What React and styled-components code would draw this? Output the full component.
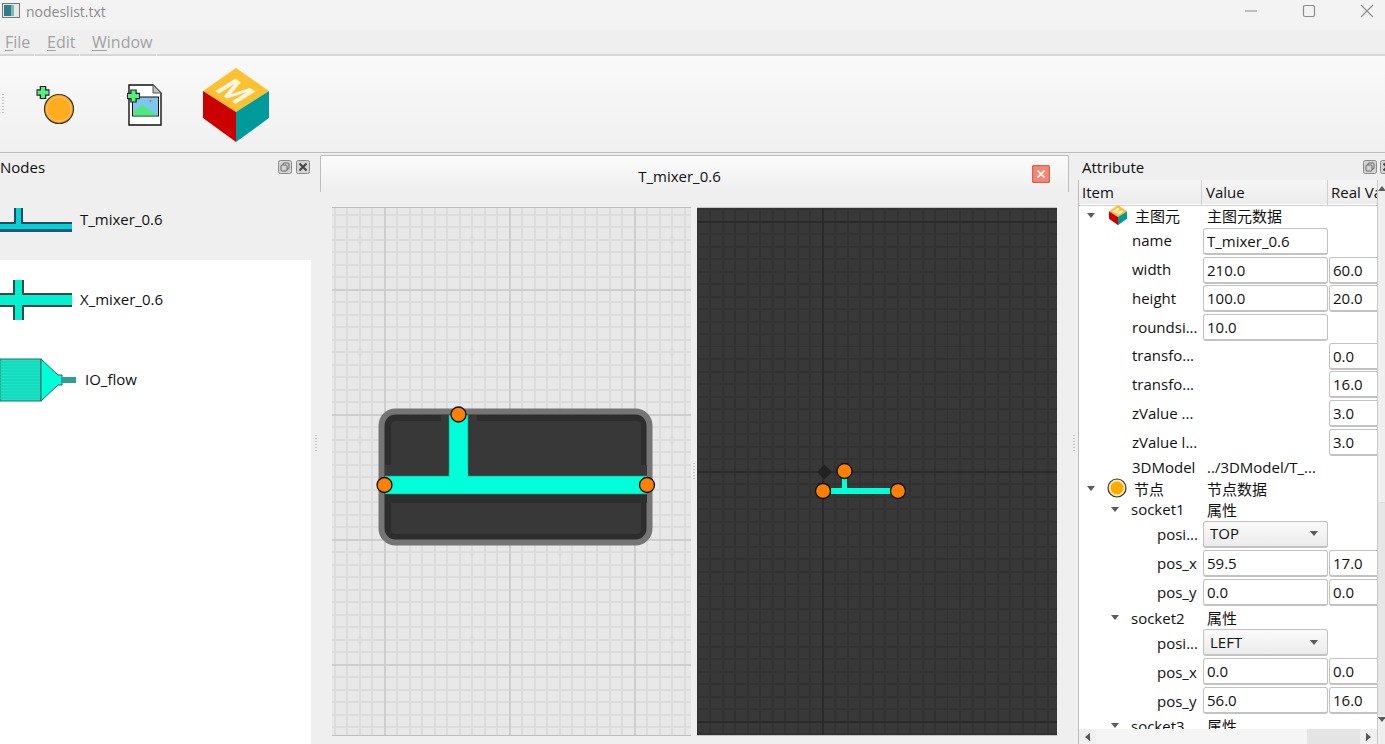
import styled, { createGlobalStyle } from "styled-components";

const GlobalStyle = createGlobalStyle`
  html, body {
    margin: 0;
    padding: 0;
    height: 100%;
    overflow: hidden;
    background: #efefef;
  }
  body {
    font-family: "Open Sans", "Noto Sans CJK SC", sans-serif;
    font-size: 15px;
    color: #111;
  }
`;

const Page = styled.div`
  width: 1385px;
  height: 744px;
  display: flex;
  flex-direction: column;
  overflow: hidden;
`;

const TitleBar = styled.div`
  height: 30px;
  flex: none;
  box-sizing: border-box;
  padding-bottom: 8px;
  margin-right: -11px;
  background: #f3f3f3;
  display: flex;
  align-items: center;
  color: #8c8c8c;
`;

const AppIcon = styled.svg`
  width: 20px;
  height: 18px;
  margin: 0 5px 0 1px;
`;

const TitleText = styled.span`
  flex: 1;
  font-size: 14px;
`;

const WinButton = styled.svg`
  width: 58px;
  height: 24px;
  flex: none;
`;

const MenuBar = styled.div`
  height: 26px;
  flex: none;
  background: #efefef;
  display: flex;
  gap: 1px;
`;

const MenuItem = styled.div`
  width: ${(p) => p.$w}px;
  flex: ${(p) => (p.$fill ? 1 : "none")};
  box-sizing: border-box;
  padding: 1px 0 0 ${(p) => p.$pad || 0}px;
  font-size: 16px;
  color: #a2a2a2;
  border-bottom: 2px solid #d6d6d6;
  u {
    text-underline-offset: 2px;
  }
`;

const ToolBar = styled.div`
  height: 96px;
  flex: none;
  box-sizing: content-box;
  padding-left: 2px;
  background: linear-gradient(#f9f9f9, #f0f0f0);
  border-bottom: 1px solid #bdbdbd;
  display: flex;
  align-items: center;
`;

const Grip = styled.div`
  width: 2px;
  height: ${(p) => p.$h}px;
  flex: none;
  background: repeating-linear-gradient(#c4c4c4 0 1px, transparent 1px 3px);
`;

const ToolButton = styled.div`
  width: ${(p) => p.$w}px;
  flex: none;
  display: flex;
  justify-content: center;
  padding-top: ${(p) => p.$down || 0}px;
`;

const Main = styled.div`
  flex: 1;
  min-height: 0;
  display: flex;
  background: #efefef;
`;

const NodesDock = styled.div`
  width: 311px;
  flex: none;
  display: flex;
  flex-direction: column;
`;

const DockHeader = styled.div`
  height: 27px;
  flex: none;
  display: flex;
  align-items: center;
  margin-right: ${(p) => p.$right}px;
  padding-left: ${(p) => p.$left}px;
  box-sizing: border-box;
  gap: ${(p) => p.$gap}px;
`;

const DockTitle = styled.span`
  flex: 1;
`;

const DockIcon = styled.svg`
  width: 14px;
  height: 14px;
  flex: none;
  margin-top: 1px;
`;

const NodeList = styled.div`
  flex: 1;
  background: #fff;
  overflow: hidden;
`;

const NodeRow = styled.div`
  height: 80px;
  display: flex;
  align-items: center;
  background: ${(p) => (p.$selected ? "#efefef" : "#fff")};
  color: #111;
`;

const NodeIcon = styled.svg`
  width: 80px;
  height: 80px;
  flex: none;
`;

const NodeName = styled.span`
  margin-left: ${(p) => p.$gap || 0}px;
  padding-bottom: ${(p) => p.$lift || 0}px;
`;

const Splitter = styled.div`
  width: ${(p) => p.$w}px;
  flex: none;
  display: flex;
  align-items: center;
  justify-content: center;
  padding-bottom: ${(p) => p.$up}px;
  box-sizing: border-box;
`;

const Center = styled.div`
  width: 749px;
  flex: none;
  display: flex;
  flex-direction: column;
  padding-top: 2px;
  box-sizing: border-box;
`;

const Tab = styled.div`
  height: 37px;
  flex: none;
  box-sizing: border-box;
  border: 1px solid #bdbdbd;
  border-bottom: none;
  border-radius: 2px 2px 0 0;
  background: linear-gradient(#fbfbfb, #efefef);
  display: flex;
  align-items: center;
  padding-right: 18px;
`;

const TabTitle = styled.span`
  flex: 1;
  text-align: center;
  padding: 3px 0 0 6px;
`;

const TabClose = styled.svg`
  width: 18px;
  height: 18px;
  flex: none;
`;

const Views = styled.div`
  display: flex;
  padding: 15px 0 0 12px;
  align-items: stretch;
`;

const GRIDS = {
  light: {
    bg: "#e8e8e8",
    minor: "#dcdcdc",
    major: "#cecece",
    border: "#bdbdbd",
    pos: "52px 81px",
    majorY: 125,
  },
  dark: {
    bg: "#383838",
    minor: "#323232",
    major: "#2a2a2a",
    border: "#c4c4c4",
    pos: "125px 13px",
    majorY: 250,
  },
};

const Canvas = styled.div`
  width: ${(p) => p.$w}px;
  height: 529px;
  flex: none;
  box-sizing: border-box;
  position: relative;
  overflow: hidden;
  border-top: 1px solid ${(p) => GRIDS[p.$kind].border};
  border-bottom: 1px solid ${(p) => GRIDS[p.$kind].border};
  background-color: ${(p) => GRIDS[p.$kind].bg};
  background-image:
    linear-gradient(to right, ${(p) => GRIDS[p.$kind].major} 2px, transparent 2px),
    linear-gradient(to bottom, ${(p) => GRIDS[p.$kind].major} 2px, transparent 2px),
    repeating-linear-gradient(to right, ${(p) => GRIDS[p.$kind].minor} 0 1.5px, transparent 1.5px 12.5px),
    repeating-linear-gradient(to bottom, ${(p) => GRIDS[p.$kind].minor} 0 1.5px, transparent 1.5px 12.5px);
  background-size:
    ${(p) => GRIDS[p.$kind].majorY}px ${(p) => GRIDS[p.$kind].majorY}px,
    ${(p) => GRIDS[p.$kind].majorY}px ${(p) => GRIDS[p.$kind].majorY}px,
    125px 125px,
    125px 125px;
  background-position: ${(p) => GRIDS[p.$kind].pos};
`;

const Scene = styled.svg`
  position: absolute;
  left: 0;
  top: -1px;
  width: 100%;
  height: 529px;
`;

const AttrDock = styled.div`
  flex: 1;
  min-width: 0;
  display: flex;
  flex-direction: column;
`;

const TreeFrame = styled.div`
  width: 300px;
  height: 564px;
  flex: none;
  box-sizing: border-box;
  border-left: 1px solid #bdbdbd;
  border-right: 1px solid #c8c8c8;
  background: #fff;
  display: flex;
  flex-direction: column;
  overflow: hidden;
`;

const COLS = "123px 126px 80px";

const TreeHead = styled.div`
  height: 24px;
  flex: none;
  display: grid;
  grid-template-columns: ${COLS};
  background: linear-gradient(#f5f5f5, #ececec);
`;

const HeadCell = styled.div`
  box-sizing: border-box;
  padding: 0 0 0 ${(p) => p.$pad || 3}px;
  line-height: 25px;
  white-space: nowrap;
  border-right: 1px solid #d0d0d0;
  border-bottom: 1px solid #d0d0d0;
`;

const TreeBody = styled.div`
  flex: 1;
  min-height: 0;
  overflow: hidden;
`;

const Row = styled.div`
  height: ${(p) => p.$h}px;
  display: grid;
  grid-template-columns: ${COLS};
  align-items: center;
  box-sizing: border-box;
  padding-bottom: ${(p) => p.$lift || 0}px;
`;

const ItemCell = styled.div`
  display: flex;
  align-items: center;
  height: 100%;
  padding-left: ${(p) => p.$indent}px;
  padding-bottom: ${(p) => p.$lift || 0}px;
  white-space: nowrap;
  box-sizing: border-box;
`;

const Caret = styled.span`
  width: 0;
  height: 0;
  flex: none;
  border-left: 4.5px solid transparent;
  border-right: 4.5px solid transparent;
  border-top: 5px solid #5c5c5c;
  transform: ${(p) => (p.$flip ? "rotate(180deg)" : "none")};
`;

const RowIcon = styled.svg`
  width: 20px;
  height: 20px;
  flex: none;
`;

const ValueText = styled.div`
  padding-left: 5px;
  white-space: nowrap;
`;

const ValueInput = styled.div`
  height: 27px;
  box-sizing: border-box;
  margin-left: 1px;
  margin-right: ${(p) => (p.$real ? -30 : 0)}px;
  padding-left: 3px;
  line-height: 25px;
  background: #fff;
  border: 1px solid #c2c2c2;
  border-bottom-width: 2px;
  border-radius: 3px;
`;

const ValueCombo = styled(ValueInput)`
  display: flex;
  align-items: center;
  padding: 0 9px 0 6px;
  justify-content: space-between;
  background: linear-gradient(#fafafa, #ececec);
`;

const HScroll = styled.div`
  height: 15px;
  flex: none;
  display: flex;
  background: #f5f5f5;
`;

const ScrollBtn = styled.div`
  width: 17px;
  flex: none;
  display: flex;
  align-items: center;
  justify-content: center;
  background: #f0f0f0;
`;

const Arrow = styled.span`
  width: 0;
  height: 0;
  border-top: 4.5px solid transparent;
  border-bottom: 4.5px solid transparent;
  border-${(p) => (p.$left ? "right" : "left")}: 5px solid #555;
`;

const HTrack = styled.div`
  flex: 1;
  display: flex;
  padding-left: 211px;
`;

const HThumb = styled.div`
  width: 53px;
  background: #e4e4e4;
`;

const AttrBody = styled.div`
  display: flex;
  flex: 1;
  min-height: 0;
`;

const VScroll = styled.div`
  flex: 1;
  display: flex;
  flex-direction: column;
  background: #efefef;
`;

const VThumbGap = styled.div`
  height: 323px;
  box-sizing: border-box;
  display: flex;
  justify-content: center;
  padding-top: 6px;
  border-bottom: 1px solid #dedede;
`;

const VThumb = styled.div`
  height: 212px;
  background: #e6e6e6;
`;

const VEnd = styled.div`
  display: flex;
  justify-content: center;
  padding-top: 2px;
`;

function DockButtons() {
  return (
    <>
      <DockIcon viewBox="0 0 14 14">
        <rect x="0.5" y="0.5" width="13" height="13" rx="2" fill="#d4d4d4" stroke="#8a8a8a" />
        <rect x="5" y="3" width="6" height="6" rx="1" fill="none" stroke="#666" />
        <rect x="3" y="5" width="6" height="6" rx="1" fill="#d4d4d4" stroke="#666" />
      </DockIcon>
      <DockIcon viewBox="0 0 14 14">
        <rect x="0.5" y="0.5" width="13" height="13" rx="2" fill="#d4d4d4" stroke="#8a8a8a" />
        <path d="M3.5 3.5l7 7M10.5 3.5l-7 7" stroke="#444" strokeWidth="2" />
      </DockIcon>
    </>
  );
}

function CubeIcon({ size }) {
  return (
    <svg viewBox="0 0 66 74" width={size} height={(size * 74) / 66}>
      <polygon points="33,0 66,23 33,44 0,23" fill="#fdc030" />
      <polygon points="0,23 33,44 33,74 0,50" fill="#cc0000" />
      <polygon points="66,23 33,44 33,74 66,50" fill="#009a9a" />
      <text
        transform="matrix(0.85 0.53 -0.85 0.53 10.6 21.9)"
        fontFamily="Liberation Sans"
        fontWeight="700"
        fontSize="34"
        fill="#fff6e2"
      >
        M
      </text>
    </svg>
  );
}

function Socket({ x, y, r }) {
  return <circle cx={x} cy={y} r={r} fill="#ff7f00" stroke="#111" strokeWidth="1.3" />;
}

function LightScene() {
  return (
    <Scene viewBox="332 207 359 529">
      <rect x="381.5" y="411.5" width="268" height="131" rx="14" fill="#2d2d2d" stroke="#757575" strokeWidth="6" />
      <rect x="391" y="421" width="250" height="113" rx="4" fill="#383838" />
      <rect x="385" y="494" width="262" height="9" fill="#2d2d2d" />
      <rect x="441" y="415" width="8" height="6" fill="#383838" />
      <rect x="468" y="415" width="9" height="6" fill="#383838" />
      <rect x="385" y="465" width="6" height="11" fill="#383838" />
      <rect x="641" y="465" width="6" height="11" fill="#383838" />
      <rect x="449" y="415" width="19" height="62" fill="#00ffd8" stroke="#1f8f80" strokeWidth="0.6" />
      <rect x="385" y="476" width="262" height="18" fill="#00ffd8" stroke="#1f8f80" strokeWidth="0.6" />
      <rect x="449.5" y="470" width="18" height="10" fill="#00ffd8" />
      <Socket x={458.5} y={414.5} r={7.5} />
      <Socket x={384.5} y={485} r={7.5} />
      <Socket x={647} y={485} r={7.5} />
    </Scene>
  );
}

function DarkScene() {
  return (
    <Scene viewBox="697 207 360 529">
      <polygon points="824.5,464.5 832,472 824.5,479.5 817,472" fill="#222" />
      <rect x="831" y="488" width="60" height="6" fill="#00ffd8" />
      <rect x="842" y="477" width="5" height="12" fill="#00ffd8" />
      <Socket x={844.5} y={471} r={7.5} />
      <Socket x={823} y={491} r={7.5} />
      <Socket x={898} y={491} r={7.5} />
    </Scene>
  );
}

function Field({ item, indent, value, real, combo, h = 29, lift }) {
  return (
    <Row $h={h}>
      <ItemCell $indent={indent} $lift={lift}>{item}</ItemCell>
      {combo ? (
        <ValueCombo>
          {value}
          <Caret />
        </ValueCombo>
      ) : value ? (
        <ValueInput>{value}</ValueInput>
      ) : (
        <div />
      )}
      {real ? <ValueInput $real>{real}</ValueInput> : <div />}
    </Row>
  );
}

function Group({ label, note, h }) {
  return (
    <Row $h={h}>
      <ItemCell $indent={32}>
        <Caret />
        <NodeName $gap={12}>{label}</NodeName>
      </ItemCell>
      <ValueText>{note}</ValueText>
    </Row>
  );
}

export default function App() {
  return (
    <Page>
      <GlobalStyle />
      <TitleBar>
        <AppIcon viewBox="0 0 20 18">
          <rect x="1.5" y="1.5" width="17" height="14" fill="#e8e8e8" stroke="#777" />
          <rect x="3" y="3" width="7" height="11" fill="#2f7d8c" />
          <rect x="10" y="3" width="3" height="11" fill="#7fb8a8" />
        </AppIcon>
        <TitleText>nodeslist.txt</TitleText>
        <WinButton viewBox="0 0 58 24">
          <path d="M23 12h12" stroke="#999" strokeWidth="1.2" />
        </WinButton>
        <WinButton viewBox="0 0 58 24">
          <rect x="23.5" y="6.5" width="11" height="11" rx="1.5" fill="none" stroke="#8c8c8c" strokeWidth="1.2" />
        </WinButton>
        <WinButton viewBox="0 0 58 24">
          <path d="M23 6l12 12M35 6l-12 12" stroke="#8c8c8c" strokeWidth="1.1" />
        </WinButton>
      </TitleBar>
      <MenuBar>
        <MenuItem $w={34} $pad={5}><u>F</u>ile</MenuItem>
        <MenuItem $w={44} $pad={12}><u>E</u>dit</MenuItem>
        <MenuItem $w={76} $pad={12}><u>W</u>indow</MenuItem>
        <MenuItem $fill />
      </MenuBar>
      <ToolBar>
        <Grip $h={20} />
        <ToolButton $w={103} $down={1}>
          <svg width="42" height="44" viewBox="0 0 42 44">
            <circle cx="24" cy="26" r="14.5" fill="#ffad1f" stroke="#333" strokeWidth="1.2" />
            <circle cx="24" cy="26" r="12" fill="none" stroke="#f7c46c" strokeWidth="1" />
            <path d="M8 3v13M1.5 9.5h13" stroke="#222" strokeWidth="6.5" />
            <path d="M8 4v11M2.5 9.5h11" stroke="#52f07c" strokeWidth="4" />
          </svg>
        </ToolButton>
        <ToolButton $w={75}>
          <svg width="38" height="44" viewBox="0 0 38 44">
            <path d="M3 3h24l8 8v32H3z" fill="#fff" stroke="#111" strokeWidth="1.4" />
            <path d="M27 3v8h8z" fill="#b9c4c4" stroke="#555" />
            <rect x="6.5" y="15" width="26" height="19" fill="#7cc7f0" stroke="#111" />
            <path d="M7 33.5V30L16.5 23 32 33.5z" fill="#52e87c" />
            <circle cx="24.5" cy="19" r="1.2" fill="#f06a6a" />
            <path d="M7.5 7.5v13M1 14h13" stroke="#222" strokeWidth="6.5" />
            <path d="M7.5 8.5v11M2 14h11" stroke="#52f07c" strokeWidth="4" />
          </svg>
        </ToolButton>
        <ToolButton $w={108} $down={2}>
          <CubeIcon size={66} />
        </ToolButton>
      </ToolBar>
      <Main>
        <NodesDock>
          <DockHeader $left={0} $right={1} $gap={4}>
            <DockTitle>Nodes</DockTitle>
            <DockButtons />
          </DockHeader>
          <NodeList>
            <NodeRow $selected>
              <NodeIcon viewBox="0 0 80 80">
                <path d="M14 28h9v15h-9zM0 42h72v10H0z" fill="#00d2d8" />
                <path d="M15 28v15H0M22 28v15h50" fill="none" stroke="#264a5c" strokeWidth="2" />
                <rect y="49" width="72" height="3" fill="#1f5a7c" />
              </NodeIcon>
              <NodeName $lift={2}>T_mixer_0.6</NodeName>
            </NodeRow>
            <NodeRow>
              <NodeIcon viewBox="0 0 80 80">
                <rect x="13" y="20" width="11" height="40" fill="#00f0d0" />
                <rect y="34" width="72" height="12" fill="#00f0d0" />
                <path d="M14 20v14H0M23 20v14h49M14 60V46H0M23 60V46h49" fill="none" stroke="#444" strokeWidth="2" />
              </NodeIcon>
              <NodeName $lift={2}>X_mixer_0.6</NodeName>
            </NodeRow>
            <NodeRow>
              <NodeIcon viewBox="0 0 80 80">
                <rect y="19" width="41" height="42" fill="#10e8c8" stroke="#2a6a60" />
                <path d="M0 22h40M0 25h40M0 28h40M0 31h40M0 34h40M0 37h40M0 40h40M0 43h40M0 46h40M0 49h40M0 52h40M0 55h40M0 58h40" stroke="#22c8b0" />
                <path d="M41 19L58 35h4v10h-4L41 61z" fill="#00ffd8" stroke="#2a6a60" />
                <rect x="62" y="37" width="14" height="6" fill="#2fa090" />
              </NodeIcon>
              <NodeName $gap={5} $lift={2}>IO_flow</NodeName>
            </NodeRow>
          </NodeList>
        </NodesDock>
        <Splitter $w={9} $up={10}>
          <Grip $h={18} />
        </Splitter>
        <Center>
          <Tab>
            <TabTitle>T_mixer_0.6</TabTitle>
            <TabClose viewBox="0 0 18 18">
              <rect x="0.5" y="0.5" width="17" height="17" rx="2" fill="#f08a78" stroke="#e2614e" strokeWidth="1.5" />
              <path d="M5.5 5.5l7 7M12.5 5.5l-7 7" stroke="#fff" strokeWidth="1.6" />
            </TabClose>
          </Tab>
          <Views>
            <Canvas $kind="light" $w={359}>
              <LightScene />
            </Canvas>
            <Splitter $w={6} $up={0}>
              <Grip $h={18} />
            </Splitter>
            <Canvas $kind="dark" $w={360}>
              <DarkScene />
            </Canvas>
          </Views>
        </Center>
        <Splitter $w={9} $up={10}>
          <Grip $h={18} />
        </Splitter>
        <AttrDock>
          <DockHeader $left={4} $right={-9} $gap={3}>
            <DockTitle>Attribute</DockTitle>
            <DockButtons />
          </DockHeader>
          <AttrBody>
            <TreeFrame>
              <TreeHead>
                <HeadCell>Item</HeadCell>
                <HeadCell $pad={4}>Value</HeadCell>
                <HeadCell>Real Value</HeadCell>
              </TreeHead>
              <TreeBody>
                <Row $h={23} $lift={1}>
                  <ItemCell $indent={8}>
                    <Caret />
                    <NodeName $gap={14} as="span" />
                    <CubeIcon size={18} />
                    <NodeName $gap={8}>主图元</NodeName>
                  </ItemCell>
                  <ValueText>主图元数据</ValueText>
                </Row>
                <Field item="name" indent={53} value="T_mixer_0.6" h={28.7} lift={2} />
                <Field item="width" indent={53} value="210.0" real="60.0" h={28.7} lift={2} />
                <Field item="height" indent={53} value="100.0" real="20.0" h={28.7} lift={2} />
                <Field item="roundsi..." indent={53} value="10.0" h={28.7} />
                <Field item="transfo..." indent={53} real="0.0" h={28.7} lift={2} />
                <Field item="transfo..." indent={53} real="16.0" h={28.7} lift={2} />
                <Field item="zValue ..." indent={53} real="3.0" h={28.7} />
                <Field item="zValue l..." indent={53} real="3.0" h={28.7} />
                <Row $h={21}>
                  <ItemCell $indent={53}>3DModel</ItemCell>
                  <ValueText>../3DModel/T_...</ValueText>
                </Row>
                <Row $h={21}>
                  <ItemCell $indent={8}>
                    <Caret />
                    <NodeName $gap={12} as="span" />
                    <RowIcon viewBox="0 0 20 20">
                      <circle cx="10" cy="10" r="9" fill="#ffe9b0" stroke="#333" strokeWidth="1.2" />
                      <circle cx="10" cy="10" r="6.5" fill="#ffab00" />
                    </RowIcon>
                    <NodeName $gap={7}>节点</NodeName>
                  </ItemCell>
                  <ValueText>节点数据</ValueText>
                </Row>
                <Group label="socket1" note="属性" h={21.4} />
                <Field item="posi..." indent={78} value="TOP" combo />
                <Field item="pos_x" indent={78} value="59.5" real="17.0" />
                <Field item="pos_y" indent={78} value="0.0" real="0.0" />
                <Group label="socket2" note="属性" h={21.5} />
                <Field item="posi..." indent={78} value="LEFT" combo />
                <Field item="pos_x" indent={78} value="0.0" real="0.0" />
                <Field item="pos_y" indent={78} value="56.0" real="16.0" />
                <Group label="socket3" note="属性" h={21} />
              </TreeBody>
              <HScroll>
                <ScrollBtn><Arrow $left /></ScrollBtn>
                <HTrack><HThumb /></HTrack>
                <ScrollBtn><Arrow /></ScrollBtn>
              </HScroll>
            </TreeFrame>
            <VScroll>
              <VThumbGap>
                <Caret $flip />
              </VThumbGap>
              <VThumb />
              <VEnd>
                <Caret />
              </VEnd>
            </VScroll>
          </AttrBody>
        </AttrDock>
      </Main>
    </Page>
  );
}
